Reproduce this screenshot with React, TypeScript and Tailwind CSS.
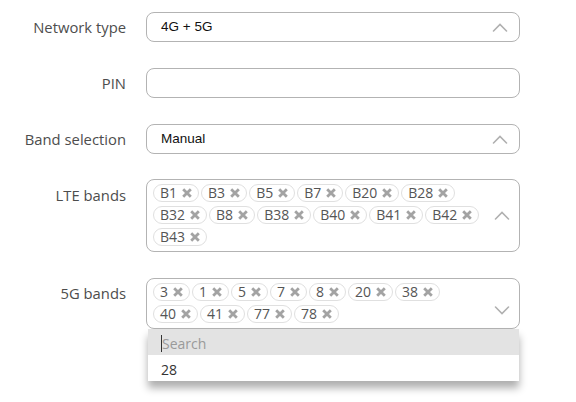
import type { ReactNode } from 'react';

const lteBands = ['B1', 'B3', 'B5', 'B7', 'B20', 'B28', 'B32', 'B8', 'B38', 'B40', 'B41', 'B42', 'B43'];
const nrBands = ['3', '1', '5', '7', '8', '20', '38', '40', '41', '77', '78'];

function Chevron({ up }: { up?: boolean }) {
  return (
    <svg width="16" height="9" viewBox="0 0 16 9" fill="none" stroke="#b0b0b0" strokeWidth="1.6" strokeLinecap="round">
      {up ? <path d="M1.5 8 L8 1.5 L14.5 8" /> : <path d="M1.5 1 L8 7.5 L14.5 1" />}
    </svg>
  );
}

function Cross() {
  return (
    <svg width="10" height="10" viewBox="0 0 10 10" stroke="#a3a3a3" strokeWidth="2.8" className="ml-[5px]">
      <path d="M1.2 1.2 L8.8 8.8 M8.8 1.2 L1.2 8.8" />
    </svg>
  );
}

function Tag({ label }: { label: string }) {
  return (
    <span className="inline-flex items-center h-[18px] rounded-full border border-[#e0e0e0] bg-white pl-[6px] pr-[6px] text-[14px] leading-[16px] text-[#555]">
      {label}
      <Cross />
    </span>
  );
}

function Row({ label, children }: { label: string; children: ReactNode }) {
  return (
    <div className="flex items-start">
      <div className="w-[126px] h-[30px] flex items-center justify-end text-[14.8px] text-[#4d4d4d]">{label}</div>
      <div className="ml-[20px] w-[374px]">{children}</div>
    </div>
  );
}

function Select({ value }: { value: string }) {
  return (
    <div className="h-[30px] flex items-center border border-[#b3b3b3] rounded-[8px] pl-[14px] pr-[11px]">
      <span className="flex-1 text-[13.5px] text-[#111]" style={{ fontFamily: '"Liberation Sans", Arial, sans-serif' }}>{value}</span>
      <Chevron up />
    </div>
  );
}

export default function App() {
  return (
    <div className="w-[576px] h-[402px] bg-white pt-[12px] flex flex-col gap-[26px]" style={{ fontFamily: '"Open Sans", sans-serif' }}>
      <Row label="Network type">
        <Select value="4G + 5G" />
      </Row>
      <Row label="PIN">
        <div className="h-[30px] border border-[#b3b3b3] rounded-[8px]" />
      </Row>
      <Row label="Band selection">
        <Select value="Manual" />
      </Row>
      <Row label="LTE bands">
        <div className="-mt-px flex border border-[#b3b3b3] rounded-[8px] pl-[6px] pt-[4px] pb-[5px]">
          <div className="w-[330px] flex flex-wrap gap-x-[2px] gap-y-[4px]">
            {lteBands.map((b) => <Tag key={b} label={b} />)}
          </div>
          <div className="flex-1 flex items-center justify-center pl-[2px]">
            <Chevron up />
          </div>
        </div>
      </Row>
      <Row label="5G bands">
        <div className="relative">
          <div className="flex border border-[#b3b3b3] rounded-[8px] pl-[6px] pt-[4px] pb-[5px]">
            <div className="w-[330px] flex flex-wrap gap-x-[2px] gap-y-[4px]">
              {nrBands.map((b) => <Tag key={b} label={b} />)}
            </div>
            <div className="flex-1 flex items-start justify-center pt-[23px] pl-[2px]">
              <Chevron />
            </div>
          </div>
          <div className="absolute left-[2px] right-[1px] top-full bg-white shadow-[0_7px_8px_rgba(0,0,0,0.32)]">
            <div className="h-[26px] bg-[#e3e3e3] flex items-center pl-[13px] pt-[3px] text-[14px]">
              <span className="w-px h-[17px] bg-[#333]" />
              <span className="text-[#9a9a9a]">Search</span>
            </div>
            <div className="h-[26px] flex items-center pl-[13px] pt-[3px] text-[14px] text-[#333]">28</div>
          </div>
        </div>
      </Row>
    </div>
  );
}
